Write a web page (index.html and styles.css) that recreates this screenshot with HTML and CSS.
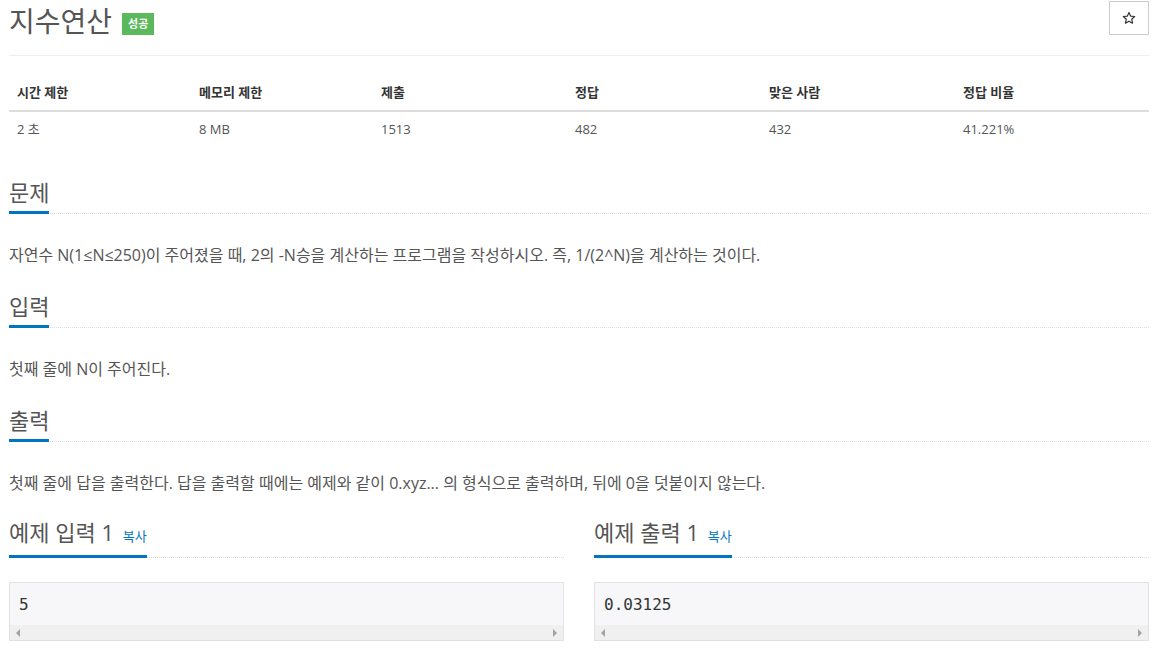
FILE: index.html
```html
<!DOCTYPE html>
<html lang="ko">
<head>
<meta charset="utf-8">
<title>지수연산</title>
<link rel="stylesheet" href="styles.css">
</head>
<body>
<div class="container">
  <div class="page-header">
    <div class="title-wrap">
      <h1 class="title">지수연산</h1>
      <span class="badge">성공</span>
    </div>
    <button class="star-btn" type="button" aria-label="즐겨찾기">
      <svg width="14" height="14" viewBox="0 0 24 24" aria-hidden="true"><path d="M12 2.5l2.9 6.3 6.9.7-5.2 4.6 1.5 6.8L12 17.4 5.9 20.9l1.5-6.8L2.2 9.5l6.9-.7z" fill="none" stroke="#333" stroke-width="2" stroke-linejoin="round"/></svg>
    </button>
  </div>

  <table class="info">
    <colgroup>
      <col class="c1"><col class="c2"><col class="c3"><col class="c4"><col class="c5"><col class="c6">
    </colgroup>
    <thead>
      <tr><th>시간 제한</th><th>메모리 제한</th><th>제출</th><th>정답</th><th>맞은 사람</th><th>정답 비율</th></tr>
    </thead>
    <tbody>
      <tr><td>2 초</td><td>8 MB</td><td>1513</td><td>482</td><td>432</td><td>41.221%</td></tr>
    </tbody>
  </table>

  <section class="sec first">
    <div class="headline"><h2>문제</h2></div>
    <div class="desc"><p>자연수 N(1≤N≤250)이 주어졌을 때, 2의 -N승을 계산하는 프로그램을 작성하시오. 즉, 1/(2^N)을 계산하는 것이다.</p></div>
  </section>

  <section class="sec">
    <div class="headline"><h2>입력</h2></div>
    <div class="desc"><p>첫째 줄에 N이 주어진다.</p></div>
  </section>

  <section class="sec">
    <div class="headline"><h2>출력</h2></div>
    <div class="desc"><p>첫째 줄에 답을 출력한다. 답을 출력할 때에는 예제와 같이 0.xyz... 의 형식으로 출력하며, 뒤에 0을 덧붙이지 않는다.</p></div>
  </section>

  <div class="samples">
    <section class="sample">
      <div class="headline sample-head"><h2>예제 입력 1 <a class="copy" href="#">복사</a></h2></div>
      <div class="pre-box">
        <pre class="code">5</pre>
        <div class="scrollbar"><span class="arr left"></span><span class="arr right"></span></div>
      </div>
    </section>
    <section class="sample">
      <div class="headline sample-head"><h2>예제 출력 1 <a class="copy" href="#">복사</a></h2></div>
      <div class="pre-box">
        <pre class="code">0.03125</pre>
        <div class="scrollbar"><span class="arr left"></span><span class="arr right"></span></div>
      </div>
    </section>
  </div>
</div>
</body>
</html>
```
FILE: styles.css
```css
* { box-sizing: border-box; }
html, body { margin: 0; padding: 0; background: #fff; }
body {
  font-family: "Open Sans", "Noto Sans CJK KR", sans-serif;
  color: #555;
  font-size: 14px;
}
.container { padding: 0 10px 0 9px; }

.page-header {
  display: flex;
  justify-content: space-between;
  align-items: flex-start;
  height: 56px;
  border-bottom: 1px solid #eee;
}
.title-wrap { display: flex; align-items: flex-start; }
.title {
  margin: 5px 0 0;
  font-size: 28px;
  line-height: 32px;
  font-weight: 400;
  color: #555;
}
.badge {
  margin: 13px 0 0 10px;
  background: #5cb85c;
  color: #fff;
  font-size: 11px;
  font-weight: 700;
  line-height: 22px;
  height: 22px;
  padding: 0 6px;
}
.star-btn {
  margin-top: 1px;
  width: 40px;
  height: 34px;
  border: 1px solid #ccc;
  background: #fff;
  padding: 0;
  display: flex;
  align-items: center;
  justify-content: center;
}

.info {
  width: 100%;
  border-collapse: collapse;
  margin-top: 19px;
  font-size: 13px;
}
.info .c1, .info .c2 { width: 182px; }
.info .c3, .info .c4, .info .c5 { width: 194px; }
.info th, .info td {
  text-align: left;
  padding: 8px;
  line-height: 19px;
}
.info th { font-weight: 700; color: #333; border-bottom: 2px solid #ddd; }
.info td { color: #555; }

.sec { margin-top: 27px; }
.sec.first { margin-top: 33px; }
.headline {
  border-bottom: 1px dotted #ddd;
  margin-bottom: 29px;
}
.headline h2 {
  display: inline-block;
  margin: 0 0 -1px;
  font-size: 22px;
  line-height: 24px;
  font-weight: 400;
  color: #555;
  padding-bottom: 7px;
  border-bottom: 3px solid #0076c0;
}
.desc p {
  margin: 0;
  font-size: 16px;
  line-height: 24px;
  color: #555;
}

.samples {
  display: grid;
  grid-template-columns: 1fr 1fr;
  column-gap: 30px;
  margin-top: 25px;
}
.sample-head { margin-bottom: 24px; }
.copy {
  font-size: 13px;
  color: #0076c0;
  text-decoration: none;
  margin-left: 3px;
}
.pre-box {
  border: 1px solid #e1e1e8;
  background: #f7f7f9;
}
.code {
  margin: 0;
  padding: 12px 9px 10px;
  font-family: "DejaVu Sans Mono", monospace;
  font-size: 16px;
  line-height: 20px;
  color: #333;
  overflow: hidden;
}
.scrollbar {
  height: 15px;
  background: #f0f0f0;
  display: flex;
  justify-content: space-between;
  align-items: center;
  padding: 0 6px;
}
.arr { width: 0; height: 0; border-top: 4px solid transparent; border-bottom: 4px solid transparent; }
.arr.left { border-right: 4px solid #a3a3a3; }
.arr.right { border-left: 4px solid #a3a3a3; }
```
